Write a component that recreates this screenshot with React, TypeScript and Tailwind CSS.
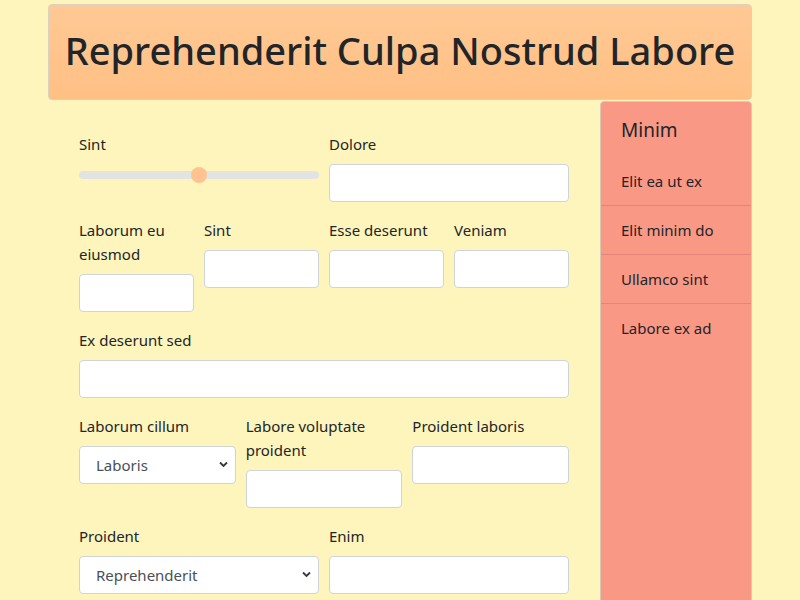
import React from "react";

const Label = ({ children }: { children: React.ReactNode }) => (
  <label className="block mb-2 text-[15px] leading-6 text-[#212529]">{children}</label>
);

const Input = () => (
  <input
    type="text"
    className="block w-full h-[38px] bg-white border border-[#ced4da] rounded-[4px] px-3 outline-none"
  />
);

const Select = ({ value }: { value: string }) => (
  <div className="relative">
    <select
      defaultValue={value}
      className="block w-full h-[38px] appearance-none bg-white border border-[#ced4da] rounded-[4px] pl-4 pr-8 text-[15px] text-[#495057] outline-none"
    >
      <option>{value}</option>
    </select>
    <svg
      className="absolute right-[8px] top-[15px] pointer-events-none"
      width="9"
      height="7"
      viewBox="0 0 9 7"
    >
      <path d="M1 1.5 L4.5 5 L8 1.5" fill="none" stroke="#343a40" strokeWidth="1.8" />
    </svg>
  </div>
);

const Field = ({ label, children }: { label: React.ReactNode; children: React.ReactNode }) => (
  <div className="flex flex-col">
    <Label>{label}</Label>
    {children}
  </div>
);

export default function App() {
  return (
    <div
      className="min-h-[600px] w-full bg-[#fef5bc] text-[#212529] overflow-hidden"
      style={{ fontFamily: '"Noto Sans", "Open Sans", sans-serif' }}
    >
      <div className="w-[704px] mx-auto pt-[4px]">
        <div className="h-[96px] rounded-[4px] border border-[#d6d2c4] bg-gradient-to-b from-[#ffc995] to-[#ffc084] flex items-center justify-center pb-[4px]">
          <h1 className="text-[38px] font-medium leading-[48px] text-[#212529]">
            Reprehenderit Culpa Nostrud Labore
          </h1>
        </div>
        <div className="flex">
          <div className="w-[552px] px-[31px] pt-[32px] flex flex-col gap-4">
            <div className="grid grid-cols-2 gap-x-[10px]">
              <div className="flex flex-col">
                <Label>Sint</Label>
                <div className="relative h-[38px]">
                  <div className="absolute left-0 right-0 top-[7px] h-[8px] rounded-full bg-[#e3e3e3]" />
                  <div className="absolute left-[112px] top-[3px] w-4 h-4 rounded-full bg-[#ffc38f]" />
                </div>
              </div>
              <Field label="Dolore">
                <Input />
              </Field>
            </div>
            <div className="grid grid-cols-4 gap-x-[10px] items-end">
              <Field label={<>Laborum eu<br />eiusmod</>}>
                <Input />
              </Field>
              <div className="self-start">
                <Field label="Sint">
                  <Input />
                </Field>
              </div>
              <div className="self-start">
                <Field label="Esse deserunt">
                  <Input />
                </Field>
              </div>
              <div className="self-start">
                <Field label="Veniam">
                  <Input />
                </Field>
              </div>
            </div>
            <Field label="Ex deserunt sed">
              <Input />
            </Field>
            <div className="grid grid-cols-3 gap-x-[10px] items-start">
              <Field label="Laborum cillum">
                <Select value="Laboris" />
              </Field>
              <Field label={<>Labore voluptate<br />proident</>}>
                <Input />
              </Field>
              <Field label="Proident laboris">
                <Input />
              </Field>
            </div>
            <div className="grid grid-cols-2 gap-x-[10px]">
              <Field label="Proident">
                <Select value="Reprehenderit" />
              </Field>
              <Field label="Enim">
                <Input />
              </Field>
            </div>
          </div>
          <div className="w-[152px] min-h-[500px] bg-[#fa9886] border border-[#d9c9b5] rounded-t-[4px] mt-[1px]">
            <div className="px-5 pt-[16px] pb-[15px] text-[19px] leading-6 font-normal">Minim</div>
            <div className="flex flex-col text-[15px] leading-6">
              <div className="px-5 py-3 border-b border-[#e0867a]">Elit ea ut ex</div>
              <div className="px-5 py-3 border-b border-[#e0867a]">Elit minim do</div>
              <div className="px-5 py-3 border-b border-[#e0867a]">Ullamco sint</div>
              <div className="px-5 py-3">Labore ex ad</div>
            </div>
          </div>
        </div>
      </div>
    </div>
  );
}
